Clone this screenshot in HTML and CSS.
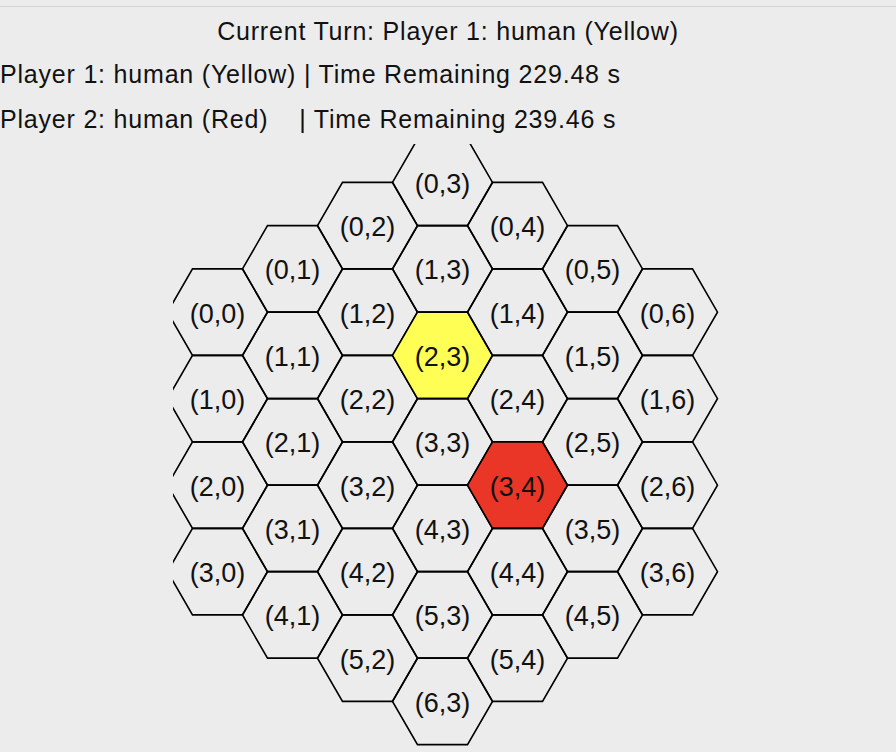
FILE: index.html
```html
<!DOCTYPE html>
<html lang="en">
<head>
    <meta http-equiv="Content-Type" content="text/html; charset=UTF-8"/>
    <title>Hex Game</title>
    <link rel="stylesheet" href="styles.css">
</head>
<body>
<div class="toolbar"></div>
<div class="turn">Current Turn: Player 1: human (Yellow)</div>
<div class="player">Player 1: human (Yellow) | Time Remaining 229.48 s</div>
<div class="player">Player 2: human (Red)    | Time Remaining 239.46 s</div>

<div class="board-box">
    <svg id="board" class="board" width="550" height="608" viewBox="0 0 550 608"></svg>
</div>

<script>
    var SIDE = 50;
    var HALF = 43.25;
    var owners = { '2,3': 'yellow', '3,4': 'red' };

    function hexPoints(cx, cy) {
        var pts = [
            [cx - SIDE, cy],
            [cx - SIDE / 2, cy - HALF],
            [cx + SIDE / 2, cy - HALF],
            [cx + SIDE, cy],
            [cx + SIDE / 2, cy + HALF],
            [cx - SIDE / 2, cy + HALF]
        ];
        return pts.map(function (p) { return p[0] + ',' + p[1]; }).join(' ');
    }

    function drawBoard() {
        var svg = document.getElementById('board');
        var ns = 'http://www.w3.org/2000/svg';
        var html = '';
        for (var c = 0; c < 7; c++) {
            var rows = 7 - Math.abs(c - 3);
            for (var r = 0; r < rows; r++) {
                var cx = 44.5 + 75 * c;
                var cy = 38.4 + 86.5 * r + HALF * Math.abs(c - 3);
                var key = r + ',' + c;
                var cls = 'cell' + (owners[key] ? ' ' + owners[key] : '');
                html += '<polygon class="' + cls + '" points="' + hexPoints(cx, cy) + '"/>';
                html += '<text class="label" x="' + cx + '" y="' + (cy + 10.5) + '">(' + key + ')</text>';
            }
        }
        svg.innerHTML = html;
    }

    drawBoard();
</script>
</body>
</html>
```

FILE: styles.css
```css
html, body {
    margin: 0;
    height: 100%;
    overflow: hidden;
}

body {
    background: #ececec;
    font-family: "Liberation Sans", Arial, sans-serif;
    font-size: 25px;
    color: #111;
}

.toolbar {
    height: 6px;
    border-bottom: 1px solid #d6d6d6;
}

.turn {
    margin-top: 3px;
    height: 42px;
    line-height: 42px;
    text-align: center;
    letter-spacing: 0.8px;
}

.player {
    height: 45px;
    line-height: 45px;
    white-space: pre;
    letter-spacing: 0.8px;
}

.board-box {
    margin-top: 2px;
    display: flex;
    justify-content: center;
}

.board {
    display: block;
    overflow: hidden;
}

.cell {
    fill: none;
    stroke: #000;
    stroke-width: 1.6;
}

.cell.yellow {
    fill: #fffe55;
}

.cell.red {
    fill: #ea3626;
}

.label {
    font-family: "Liberation Sans", Arial, sans-serif;
    font-size: 27px;
    text-anchor: middle;
    fill: #111;
}
```
